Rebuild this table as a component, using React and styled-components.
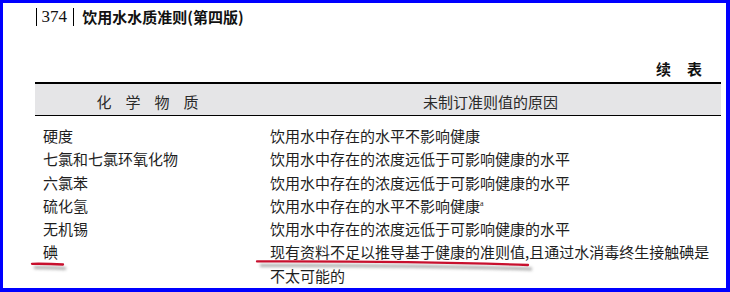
import React from 'react'
import styled, { createGlobalStyle } from 'styled-components'

const GlobalStyle = createGlobalStyle`
  html, body {
    margin: 0;
    padding: 0;
    background: #fff;
  }
`

const Frame = styled.div`
  position: relative;
  width: 730px;
  height: 292px;
  box-sizing: border-box;
  border-top: 3px solid #0000ff;
  border-left: 3px solid #0000ff;
  border-right: 4px solid #0000ff;
  border-bottom: 4px solid #0000ff;
  background: #fff;
  overflow: hidden;
  padding: 5px 5px 0 32px;
  font-family: 'Noto Sans CJK SC', 'Noto Sans', sans-serif;
  color: #1e1e1e;
`

const RunningHead = styled.div`
  display: flex;
  align-items: center;
  height: 18px;
  margin-left: 1px;
`

const Bar = styled.span`
  width: 1.4px;
  height: 18px;
  background: #000;
`

const PageNo = styled.span`
  font-family: 'Liberation Serif', serif;
  font-size: 17px;
  line-height: 18px;
  margin: 0 6px 0 4px;
  color: #111;
`

const BookTitle = styled.span`
  font-size: 15px;
  font-weight: 700;
  line-height: 18px;
  margin-left: 8px;
  color: #111;
`

const Continued = styled.div`
  display: flex;
  justify-content: flex-end;
  gap: 16px;
  margin: 34px 19px 4px 0;
  font-size: 15px;
  font-weight: 700;
  line-height: 18px;
  color: #111;
`

const Table = styled.div`
  display: grid;
  grid-template-columns: 225px 1fr;
  border-top: 2px solid #000;
`

const HeadCell = styled.div`
  background: #e5e5e7;
  border-bottom: 1px solid #000;
  height: 32px;
  box-sizing: border-box;
  padding-top: 3px;
  line-height: 29px;
  font-size: 15px;
  text-align: center;
  color: #2a2a2a;
  letter-spacing: ${p => (p.$spread ? '14px' : '0')};
  text-indent: ${p => (p.$spread ? '14px' : '0')};
`

const Cell = styled.div`
  font-size: 15px;
  line-height: 23.3px;
  padding: ${p => (p.$first ? '8px' : '0')} ${p => (p.$reason ? '4px' : '0')} 0
    ${p => (p.$reason ? '10px' : '8px')};
`

const Note = styled.sup`
  font-family: 'Liberation Serif', serif;
  font-size: 8px;
  vertical-align: 6px;
  line-height: 0;
`

const Marks = styled.svg`
  position: absolute;
  left: -3px;
  top: -3px;
  pointer-events: none;
`

const rows = [
  ['硬度', '饮用水中存在的水平不影响健康'],
  ['七氯和七氯环氧化物', '饮用水中存在的浓度远低于可影响健康的水平'],
  ['六氯苯', '饮用水中存在的浓度远低于可影响健康的水平'],
  ['硫化氢', <>饮用水中存在的水平不影响健康<Note>a</Note></>],
  ['无机锡', '饮用水中存在的浓度远低于可影响健康的水平'],
  ['碘', '现有资料不足以推导基于健康的准则值,且通过水消毒终生接触碘是不太可能的'],
]

export default function App() {
  return (
    <>
      <GlobalStyle />
      <Frame>
        <RunningHead>
          <Bar />
          <PageNo>374</PageNo>
          <Bar />
          <BookTitle>饮用水水质准则(第四版)</BookTitle>
        </RunningHead>
        <Continued>
          <span>续</span>
          <span>表</span>
        </Continued>
        <Table>
          <HeadCell $spread>化学物质</HeadCell>
          <HeadCell>未制订准则值的原因</HeadCell>
          {rows.map(([name, reason], i) => (
            <React.Fragment key={i}>
              <Cell $first={i === 0}>{name}</Cell>
              <Cell $first={i === 0} $reason>
                {reason}
              </Cell>
            </React.Fragment>
          ))}
        </Table>
        <Marks width="730" height="292" viewBox="0 0 730 292">
          <defs>
            <filter id="soft" x="-10%" y="-300%" width="120%" height="700%">
              <feGaussianBlur stdDeviation="1.6" />
            </filter>
          </defs>
          <g filter="url(#soft)" stroke="#8a8a8a" strokeWidth="3" fill="none" opacity="0.7">
            <path d="M34 267.5 C 46 267.5 56 268 66 268.5" />
            <path d="M260 265.5 Q 420 265 532 269" />
          </g>
          <g stroke="#c8102e" strokeWidth="2.3" fill="none" strokeLinecap="round">
            <path d="M32 263.8 C 45 263.6 55 264 63 264.5" />
            <path d="M257 261.4 Q 420 261 528 265" />
          </g>
        </Marks>
      </Frame>
    </>
  )
}
